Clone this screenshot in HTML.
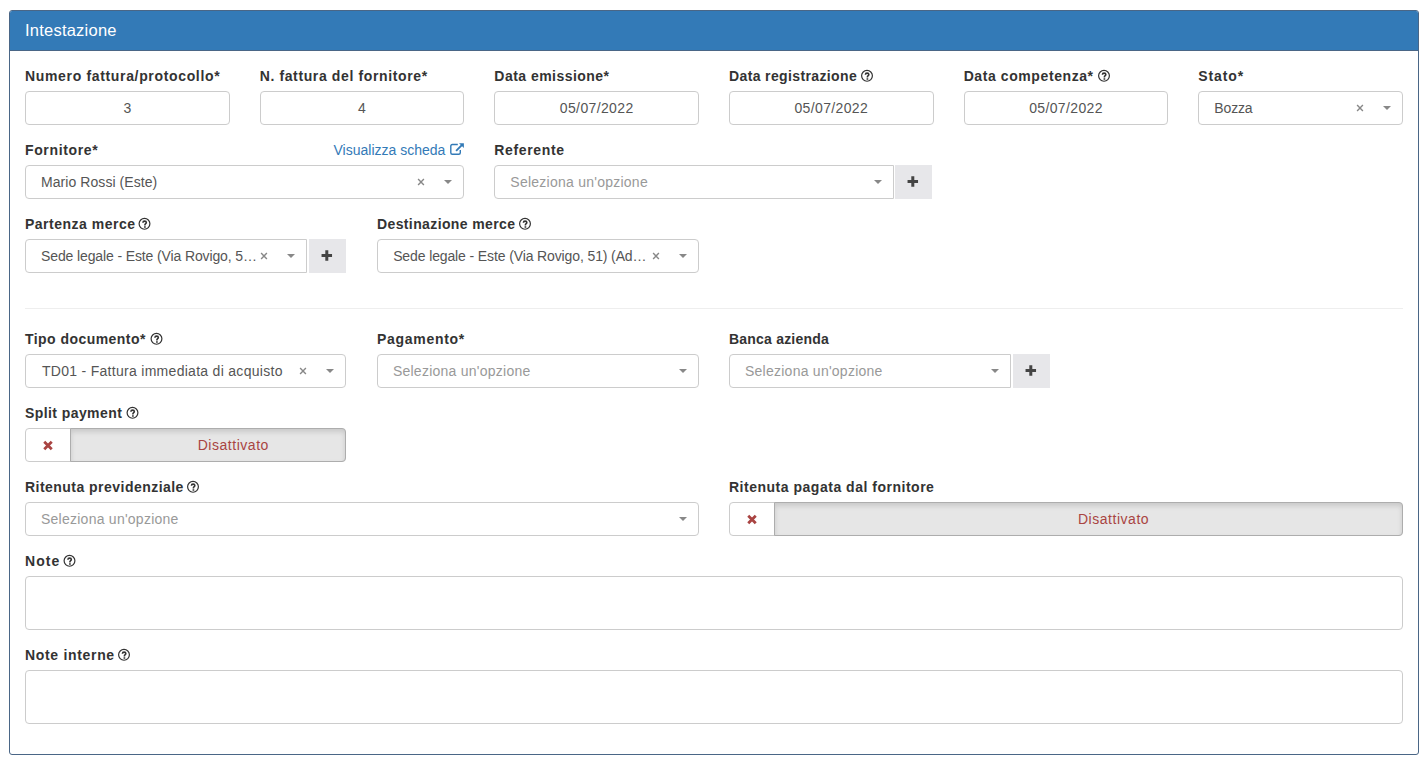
<!DOCTYPE html><html><head><meta charset="utf-8"><style>
html,body{margin:0;padding:0;background:#fff;width:1424px;height:765px;overflow:hidden}
body{position:relative;font-family:"Liberation Sans",sans-serif}
.panel{position:absolute;left:9px;top:10px;width:1408px;height:743px;border:1px solid #4a6686;border-radius:3px;background:#fff}
.hdr{position:absolute;left:10px;top:11px;width:1408px;background:#337ab7;border-radius:2px 2px 0 0;border-bottom:1px solid #4a6686;box-sizing:border-box;height:40px}
.ttl{position:absolute;left:25px;top:19px;font-size:16.5px;line-height:22px;color:#fff;letter-spacing:0.227px;white-space:nowrap}
.lbl{position:absolute;font-weight:bold;font-size:14px;line-height:20px;color:#333;white-space:nowrap}
.val,.ph,.red,.lnk{position:absolute;font-size:14px;line-height:20px;color:#555;white-space:nowrap}
.ph{color:#999}
.red{color:#a94442}
.lnk{color:#337ab7}
.box{position:absolute;box-sizing:border-box;border:1px solid #ccc;border-radius:4px;background:#fff}
.btn{position:absolute;background:#e7e7ea}
.tg{position:absolute;box-sizing:border-box;background:#e6e6e6;border:1px solid #adadad;border-radius:0 4px 4px 0;box-shadow:inset 0 3px 5px rgba(0,0,0,.125)}
.ico,.hlp{position:absolute}
.arw{position:absolute;width:0;height:0;border-style:solid;border-width:4px 4px 0 4px;border-color:#888 transparent transparent transparent}
.hr{position:absolute;left:25px;top:308px;width:1378px;height:1px;background:#eee}
</style></head><body>
<div class="panel"></div>
<div class="hdr"></div>
<div class="ttl">Intestazione</div>

<div class="lbl" style="left:25px;top:66px;letter-spacing:0.66px">Numero fattura/protocollo*</div>
<div class="lbl" style="left:259.67px;top:66px;letter-spacing:0.625px">N. fattura del fornitore*</div>
<div class="lbl" style="left:494.33px;top:66px;letter-spacing:0.464px">Data emissione*</div>
<div class="lbl" style="left:729px;top:66px;letter-spacing:0.376px">Data registrazione</div>
<svg class="hlp" style="left:859px;top:67px" width="16" height="16" viewBox="0 0 16 16"><g transform="translate(1.50,2.35)"><circle cx="6.5" cy="6.5" r="5.4" fill="none" stroke="#333" stroke-width="1.2"/><path d="M4.9 5.4 C4.9 4.2 5.6 3.75 6.6 3.75 C7.6 3.75 8.35 4.3 8.35 5.1 C8.35 6.2 6.9 6.3 6.9 7.5 L6.9 8.1" fill="none" stroke="#333" stroke-width="1.55"/><rect x="6.05" y="8.9" width="1.7" height="1.5" fill="#333"/></g></svg>
<div class="lbl" style="left:963.67px;top:66px;letter-spacing:0.587px">Data competenza*</div>
<svg class="hlp" style="left:1096px;top:67px" width="16" height="16" viewBox="0 0 16 16"><g transform="translate(1.50,2.35)"><circle cx="6.5" cy="6.5" r="5.4" fill="none" stroke="#333" stroke-width="1.2"/><path d="M4.9 5.4 C4.9 4.2 5.6 3.75 6.6 3.75 C7.6 3.75 8.35 4.3 8.35 5.1 C8.35 6.2 6.9 6.3 6.9 7.5 L6.9 8.1" fill="none" stroke="#333" stroke-width="1.55"/><rect x="6.05" y="8.9" width="1.7" height="1.5" fill="#333"/></g></svg>
<div class="lbl" style="left:1198.33px;top:66px;letter-spacing:0.86px">Stato*</div>
<div class="box" style="left:25px;top:91px;width:204.67px;height:34px"></div>
<div class="val" style="left:27.299999999999997px;width:200px;text-align:center;top:98px;letter-spacing:0px">3</div>
<div class="box" style="left:259.67px;top:91px;width:204.67px;height:34px"></div>
<div class="val" style="left:262px;width:200px;text-align:center;top:98px;letter-spacing:0px">4</div>
<div class="box" style="left:494.33px;top:91px;width:204.67px;height:34px"></div>
<div class="val" style="left:496.70000000000005px;width:200px;text-align:center;top:98px;letter-spacing:0.367px">05/07/2022</div>
<div class="box" style="left:729px;top:91px;width:204.67px;height:34px"></div>
<div class="val" style="left:731.3px;width:200px;text-align:center;top:98px;letter-spacing:0.367px">05/07/2022</div>
<div class="box" style="left:963.67px;top:91px;width:204.67px;height:34px"></div>
<div class="val" style="left:966px;width:200px;text-align:center;top:98px;letter-spacing:0.367px">05/07/2022</div>
<div class="box" style="left:1198.33px;top:91px;width:204.67px;height:34px;"></div>
<div class="val" style="left:1214.33px;top:98px;letter-spacing:-0.15px">Bozza</div>
<svg class="ico" style="left:1356.0px;top:104px" width="8" height="8" viewBox="0 0 8 8"><path d="M1.1 1.1 L6.9 6.9 M6.9 1.1 L1.1 6.9" stroke="#888" stroke-width="1.4"/></svg>
<div class="arw" style="left:1383.0px;top:106px"></div>
<div class="lbl" style="left:25px;top:140px;letter-spacing:0.633px">Fornitore*</div>
<div class="lnk" style="left:333.5px;top:140px">Visualizza scheda</div>
<svg class="ico" style="left:450px;top:143px" width="16" height="14" viewBox="0 0 16 14"><path d="M7.8 1.5 H2.3 Q0.8 1.5 0.8 3 V9.75 Q0.8 11.25 2.3 11.25 H8.8 Q10.3 11.25 10.3 9.75 V7.1" fill="none" stroke="#337ab7" stroke-width="1.4"/><path d="M6.1 7.9 L12.3 1.7" stroke="#337ab7" stroke-width="1.9"/><path d="M9.0 0.2 H13.9 V5.1 Z" fill="#337ab7"/></svg>
<div class="box" style="left:25px;top:165px;width:439.33px;height:34px;"></div>
<div class="val" style="left:41px;top:172px;letter-spacing:0.065px">Mario Rossi (Este)</div>
<svg class="ico" style="left:417.33px;top:178px" width="8" height="8" viewBox="0 0 8 8"><path d="M1.1 1.1 L6.9 6.9 M6.9 1.1 L1.1 6.9" stroke="#888" stroke-width="1.4"/></svg>
<div class="arw" style="left:444.33px;top:180px"></div>
<div class="lbl" style="left:494.33px;top:140px;letter-spacing:0.637px">Referente</div>
<div class="box" style="left:494.33px;top:165px;width:400px;height:34px;border-radius:4px 0 0 4px;"></div>
<div class="ph" style="left:510.33px;top:172px;letter-spacing:0.247px">Seleziona un&#39;opzione</div>
<div class="arw" style="left:874.3299999999999px;top:180px"></div>
<div class="btn" style="left:895px;top:165px;width:37px;height:34px"></div>
<svg class="ico" style="left:904px;top:173px" width="16" height="16" viewBox="0 0 16 16"><g transform="translate(8.80,8.50)"><path d="M0 -5.25 V5.25 M-5.25 0 H5.25" stroke="#444" stroke-width="3"/></g></svg>
<div class="lbl" style="left:25px;top:214px;letter-spacing:0.5px">Partenza merce</div>
<svg class="hlp" style="left:136px;top:215px" width="16" height="16" viewBox="0 0 16 16"><g transform="translate(2.00,2.35)"><circle cx="6.5" cy="6.5" r="5.4" fill="none" stroke="#333" stroke-width="1.2"/><path d="M4.9 5.4 C4.9 4.2 5.6 3.75 6.6 3.75 C7.6 3.75 8.35 4.3 8.35 5.1 C8.35 6.2 6.9 6.3 6.9 7.5 L6.9 8.1" fill="none" stroke="#333" stroke-width="1.55"/><rect x="6.05" y="8.9" width="1.7" height="1.5" fill="#333"/></g></svg>
<div class="box" style="left:25px;top:239px;width:282px;height:34px;border-radius:4px 0 0 4px;"></div>
<div class="val" style="left:41px;top:246px;letter-spacing:-0.121px">Sede legale - Este (Via Rovigo, 5…</div>
<svg class="ico" style="left:260px;top:252px" width="8" height="8" viewBox="0 0 8 8"><path d="M1.1 1.1 L6.9 6.9 M6.9 1.1 L1.1 6.9" stroke="#888" stroke-width="1.4"/></svg>
<div class="arw" style="left:287px;top:254px"></div>
<div class="btn" style="left:309px;top:239px;width:37px;height:34px"></div>
<svg class="ico" style="left:318px;top:247px" width="16" height="16" viewBox="0 0 16 16"><g transform="translate(8.80,8.50)"><path d="M0 -5.25 V5.25 M-5.25 0 H5.25" stroke="#444" stroke-width="3"/></g></svg>
<div class="lbl" style="left:377px;top:214px;letter-spacing:0.382px">Destinazione merce</div>
<svg class="hlp" style="left:517px;top:215px" width="16" height="16" viewBox="0 0 16 16"><g transform="translate(1.50,2.35)"><circle cx="6.5" cy="6.5" r="5.4" fill="none" stroke="#333" stroke-width="1.2"/><path d="M4.9 5.4 C4.9 4.2 5.6 3.75 6.6 3.75 C7.6 3.75 8.35 4.3 8.35 5.1 C8.35 6.2 6.9 6.3 6.9 7.5 L6.9 8.1" fill="none" stroke="#333" stroke-width="1.55"/><rect x="6.05" y="8.9" width="1.7" height="1.5" fill="#333"/></g></svg>
<div class="box" style="left:377px;top:239px;width:321.67px;height:34px;"></div>
<div class="val" style="left:393.17px;top:246px;letter-spacing:-0.121px">Sede legale - Este (Via Rovigo, 51) (Ad…</div>
<svg class="ico" style="left:651.6700000000001px;top:252px" width="8" height="8" viewBox="0 0 8 8"><path d="M1.1 1.1 L6.9 6.9 M6.9 1.1 L1.1 6.9" stroke="#888" stroke-width="1.4"/></svg>
<div class="arw" style="left:678.6700000000001px;top:254px"></div>
<div class="hr"></div>
<div class="lbl" style="left:25px;top:329px;letter-spacing:0.45px">Tipo documento*</div>
<svg class="hlp" style="left:148px;top:330px" width="16" height="16" viewBox="0 0 16 16"><g transform="translate(2.00,2.35)"><circle cx="6.5" cy="6.5" r="5.4" fill="none" stroke="#333" stroke-width="1.2"/><path d="M4.9 5.4 C4.9 4.2 5.6 3.75 6.6 3.75 C7.6 3.75 8.35 4.3 8.35 5.1 C8.35 6.2 6.9 6.3 6.9 7.5 L6.9 8.1" fill="none" stroke="#333" stroke-width="1.55"/><rect x="6.05" y="8.9" width="1.7" height="1.5" fill="#333"/></g></svg>
<div class="box" style="left:25px;top:354px;width:321.33px;height:34px;"></div>
<div class="val" style="left:42px;top:361px;letter-spacing:0.289px">TD01 - Fattura immediata di acquisto</div>
<svg class="ico" style="left:299.33px;top:367px" width="8" height="8" viewBox="0 0 8 8"><path d="M1.1 1.1 L6.9 6.9 M6.9 1.1 L1.1 6.9" stroke="#888" stroke-width="1.4"/></svg>
<div class="arw" style="left:326.33px;top:369px"></div>
<div class="lbl" style="left:377px;top:329px;letter-spacing:0.711px">Pagamento*</div>
<div class="box" style="left:377px;top:354px;width:321.67px;height:34px;"></div>
<div class="ph" style="left:392.9px;top:361px;letter-spacing:0.247px">Seleziona un&#39;opzione</div>
<div class="arw" style="left:678.6700000000001px;top:369px"></div>
<div class="lbl" style="left:729px;top:329px;letter-spacing:0.208px">Banca azienda</div>
<div class="box" style="left:729px;top:354px;width:282px;height:34px;border-radius:4px 0 0 4px;"></div>
<div class="ph" style="left:745px;top:361px;letter-spacing:0.247px">Seleziona un&#39;opzione</div>
<div class="arw" style="left:991px;top:369px"></div>
<div class="btn" style="left:1013px;top:354px;width:37px;height:34px"></div>
<svg class="ico" style="left:1022px;top:362px" width="16" height="16" viewBox="0 0 16 16"><g transform="translate(8.80,8.50)"><path d="M0 -5.25 V5.25 M-5.25 0 H5.25" stroke="#444" stroke-width="3"/></g></svg>
<div class="lbl" style="left:25px;top:403px;letter-spacing:0.417px">Split payment</div>
<svg class="hlp" style="left:124px;top:404px" width="16" height="16" viewBox="0 0 16 16"><g transform="translate(2.00,2.35)"><circle cx="6.5" cy="6.5" r="5.4" fill="none" stroke="#333" stroke-width="1.2"/><path d="M4.9 5.4 C4.9 4.2 5.6 3.75 6.6 3.75 C7.6 3.75 8.35 4.3 8.35 5.1 C8.35 6.2 6.9 6.3 6.9 7.5 L6.9 8.1" fill="none" stroke="#333" stroke-width="1.55"/><rect x="6.05" y="8.9" width="1.7" height="1.5" fill="#333"/></g></svg>
<div class="box" style="left:25px;top:428px;width:321.33px;height:34px"></div>
<div class="tg" style="left:70px;top:428px;width:276.33px;height:34px"></div>
<svg class="ico" style="left:40px;top:437px" width="16" height="16" viewBox="0 0 16 16"><g transform="translate(8.00,8.40)"><path d="M-3.75 -3.75 L3.75 3.75 M3.75 -3.75 L-3.75 3.75" stroke="#a94442" stroke-width="2.8"/></g></svg>
<div class="red" style="left:133.3px;width:200px;text-align:center;top:435px;letter-spacing:0.53px">Disattivato</div>
<div class="lbl" style="left:25px;top:477px;letter-spacing:0.467px">Ritenuta previdenziale</div>
<svg class="hlp" style="left:185px;top:478px" width="16" height="16" viewBox="0 0 16 16"><g transform="translate(1.50,2.35)"><circle cx="6.5" cy="6.5" r="5.4" fill="none" stroke="#333" stroke-width="1.2"/><path d="M4.9 5.4 C4.9 4.2 5.6 3.75 6.6 3.75 C7.6 3.75 8.35 4.3 8.35 5.1 C8.35 6.2 6.9 6.3 6.9 7.5 L6.9 8.1" fill="none" stroke="#333" stroke-width="1.55"/><rect x="6.05" y="8.9" width="1.7" height="1.5" fill="#333"/></g></svg>
<div class="box" style="left:25px;top:502px;width:673.67px;height:34px;"></div>
<div class="ph" style="left:41px;top:509px;letter-spacing:0.247px">Seleziona un&#39;opzione</div>
<div class="arw" style="left:678.67px;top:517px"></div>
<div class="lbl" style="left:729px;top:477px;letter-spacing:0.511px">Ritenuta pagata dal fornitore</div>
<div class="box" style="left:729px;top:502px;width:673.67px;height:34px"></div>
<div class="tg" style="left:774px;top:502px;width:628.67px;height:34px"></div>
<svg class="ico" style="left:744px;top:511px" width="16" height="16" viewBox="0 0 16 16"><g transform="translate(8.00,8.40)"><path d="M-3.75 -3.75 L3.75 3.75 M3.75 -3.75 L-3.75 3.75" stroke="#a94442" stroke-width="2.8"/></g></svg>
<div class="red" style="left:1013.5999999999999px;width:200px;text-align:center;top:509px;letter-spacing:0.53px">Disattivato</div>
<div class="lbl" style="left:25px;top:551px;letter-spacing:1.1px">Note</div>
<svg class="hlp" style="left:61px;top:552px" width="16" height="16" viewBox="0 0 16 16"><g transform="translate(2.00,2.35)"><circle cx="6.5" cy="6.5" r="5.4" fill="none" stroke="#333" stroke-width="1.2"/><path d="M4.9 5.4 C4.9 4.2 5.6 3.75 6.6 3.75 C7.6 3.75 8.35 4.3 8.35 5.1 C8.35 6.2 6.9 6.3 6.9 7.5 L6.9 8.1" fill="none" stroke="#333" stroke-width="1.55"/><rect x="6.05" y="8.9" width="1.7" height="1.5" fill="#333"/></g></svg>
<div class="box" style="left:25px;top:576px;width:1377.67px;height:54px"></div>
<div class="lbl" style="left:25px;top:645px;letter-spacing:0.68px">Note interne</div>
<svg class="hlp" style="left:116px;top:646px" width="16" height="16" viewBox="0 0 16 16"><g transform="translate(1.50,2.35)"><circle cx="6.5" cy="6.5" r="5.4" fill="none" stroke="#333" stroke-width="1.2"/><path d="M4.9 5.4 C4.9 4.2 5.6 3.75 6.6 3.75 C7.6 3.75 8.35 4.3 8.35 5.1 C8.35 6.2 6.9 6.3 6.9 7.5 L6.9 8.1" fill="none" stroke="#333" stroke-width="1.55"/><rect x="6.05" y="8.9" width="1.7" height="1.5" fill="#333"/></g></svg>
<div class="box" style="left:25px;top:670px;width:1377.67px;height:54px"></div>
</body></html>
